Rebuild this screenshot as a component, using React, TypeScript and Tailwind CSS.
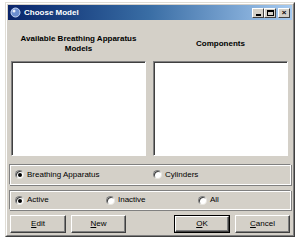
import React from 'react';

const font = { fontFamily: '"Liberation Sans", Arial, sans-serif' };

function Radio({ checked, label, className = '' }: { checked?: boolean; label: string; className?: string }) {
  return (
    <div className={`flex items-center gap-[3px] ${className}`}>
      <span className="relative w-[9px] h-[9px] rounded-full bg-white border border-t-[#808080] border-l-[#808080] border-b-[#e8e6e0] border-r-[#e8e6e0] shadow-[inset_1px_1px_0_#404040]">
        {checked && <span className="absolute left-[2px] top-[2px] w-[4px] h-[4px] rounded-full bg-black" />}
      </span>
      <span className="text-[8px] leading-none text-black">{label}</span>
    </div>
  );
}

function Button({ label, u, def, className = '' }: { label: string; u: number; def?: boolean; className?: string }) {
  return (
    <div className={`h-[18px] ${def ? 'border border-black' : ''} ${className}`}>
      <div className="h-full w-full flex items-center justify-center bg-[#d4d0c8] border border-t-white border-l-white border-b-[#404040] border-r-[#404040] shadow-[inset_-1px_-1px_0_#808080]">
        <span className="text-[8px] leading-none text-black">
          {label.slice(0, u)}
          <span className="underline">{label[u]}</span>
          {label.slice(u + 1)}
        </span>
      </div>
    </div>
  );
}

function TitleBtn({ children, className = '' }: { children: React.ReactNode; className?: string }) {
  return (
    <div className={`w-[12px] h-[10px] bg-[#d4d0c8] border border-t-white border-l-white border-b-[#404040] border-r-[#404040] flex items-center justify-center ${className}`}>
      {children}
    </div>
  );
}

export default function App() {
  return (
    <div className="w-[300px] h-[243px] bg-white pt-[2px] pl-[5px]" style={font}>
      <div className="w-[290px] h-[235px] bg-[#d4d0c8] border border-t-[#e0ddd6] border-l-[#e0ddd6] border-b-[#404040] border-r-[#404040] flex flex-col">
        <div className="flex-1 flex flex-col border border-t-white border-l-white border-b-[#808080] border-r-[#808080] px-[1px] pt-[1px]">
          {/* Title bar */}
          <div className="h-[15px] flex items-center pl-[2px] pr-[2px] bg-gradient-to-r from-[#0a246a] via-[#3a6ea5] to-[#a6caf0]">
            <svg width="11" height="11" viewBox="0 0 11 11" className="mr-[3px]">
              <circle cx="5.5" cy="5.5" r="4.5" fill="#6d8fd0" stroke="#c8d8f4" strokeWidth="1" />
              <circle cx="4" cy="4" r="1.5" fill="#e8eefa" />
            </svg>
            <span className="text-[8px] font-bold text-white leading-none">Choose Model</span>
            <div className="ml-auto flex items-center">
              <TitleBtn>
                <span className="mt-[4px] w-[5px] h-[2px] bg-black" />
              </TitleBtn>
              <TitleBtn>
                <span className="w-[7px] h-[6px] border border-black border-t-2" />
              </TitleBtn>
              <TitleBtn className="ml-[2px]">
                <span className="text-[8px] font-bold leading-none text-black">×</span>
              </TitleBtn>
            </div>
          </div>

          {/* Column headers */}
          <div className="h-[41px] flex items-center px-[3px] pt-[6px]">
            <div className="w-[135px] text-center text-[8px] font-bold leading-[10px] text-black">
              Available Breathing Apparatus
              <br />
              Models
            </div>
            <div className="w-[135px] ml-[7px] text-center text-[8px] font-bold leading-[10px] text-black">
              Components
            </div>
          </div>

          {/* Lists */}
          <div className="flex px-[3px]">
            <div className="w-[135px] h-[95px] bg-white border border-t-[#808080] border-l-[#808080] border-b-white border-r-white shadow-[inset_1px_1px_0_#404040]" />
            <div className="w-[135px] h-[95px] ml-[7px] bg-white border border-t-[#808080] border-l-[#808080] border-b-white border-r-white shadow-[inset_1px_1px_0_#404040]" />
          </div>

          {/* Group: type */}
          <div className="mt-[8px] mx-[1px] h-[21px] border border-t-[#808080] border-l-[#808080] border-b-white border-r-white shadow-[inset_1px_1px_0_white,1px_1px_0_#808080] flex items-center pl-[5px]">
            <Radio checked label="Breathing Apparatus" className="w-[138px]" />
            <Radio label="Cylinders" />
          </div>

          {/* Group: status */}
          <div className="mt-[5px] mx-[1px] h-[20px] border border-t-[#808080] border-l-[#808080] border-b-white border-r-white shadow-[inset_1px_1px_0_white,1px_1px_0_#808080] flex items-center pl-[5px]">
            <Radio checked label="Active" className="w-[91px]" />
            <Radio label="Inactive" className="w-[92px]" />
            <Radio label="All" />
          </div>

          {/* Buttons */}
          <div className="mt-[5px] flex px-[2px]">
            <Button label="Edit" u={0} className="w-[56px]" />
            <Button label="New" u={0} className="w-[55px] ml-[5px]" />
            <Button label="OK" u={0} def className="w-[56px] ml-auto" />
            <Button label="Cancel" u={0} className="w-[55px] ml-[5px]" />
          </div>
        </div>
      </div>
    </div>
  );
}
